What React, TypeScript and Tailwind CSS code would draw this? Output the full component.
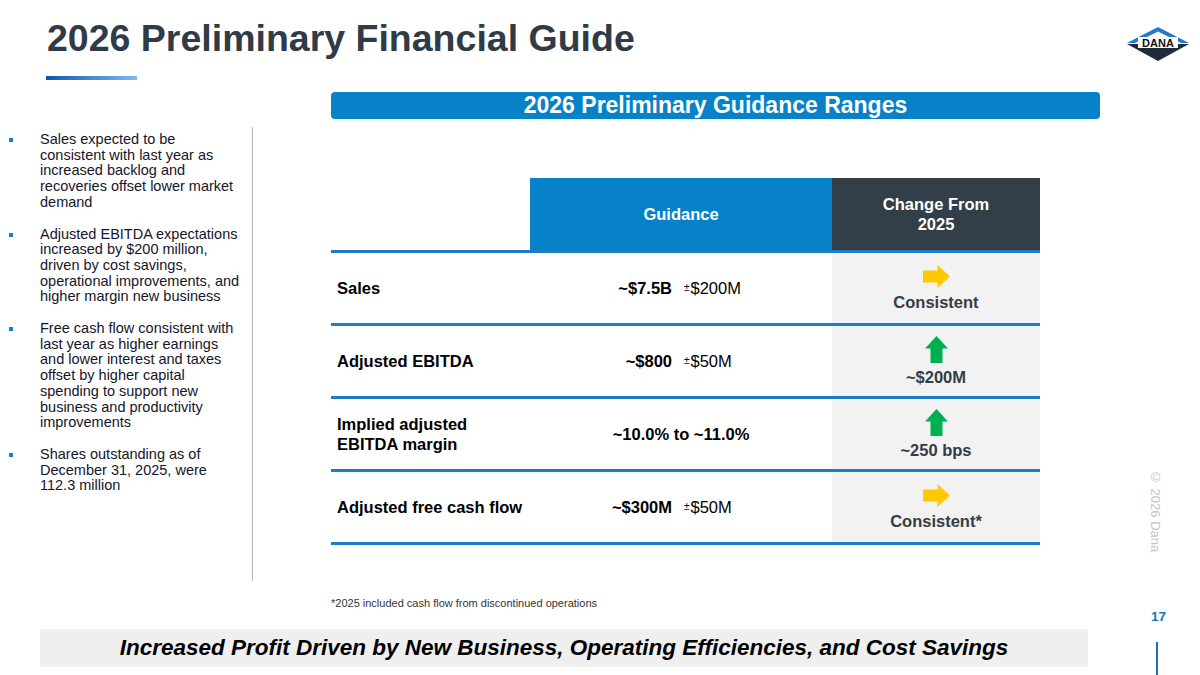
import React from "react";

const bullets: string[][] = [
  [
    "Sales expected to be",
    "consistent with last year as",
    "increased backlog and",
    "recoveries offset lower market",
    "demand",
  ],
  [
    "Adjusted EBITDA expectations",
    "increased by $200 million,",
    "driven by cost savings,",
    "operational improvements, and",
    "higher margin new business",
  ],
  [
    "Free cash flow consistent with",
    "last year as higher earnings",
    "and lower interest and taxes",
    "offset by higher capital",
    "spending to support new",
    "business and productivity",
    "improvements",
  ],
  ["Shares outstanding as of", "December 31, 2025, were", "112.3 million"],
];

type Row = {
  label: string[];
  value?: string;
  range?: string;
  centered?: string;
  arrow: "up" | "right";
  change: string;
};

const rows: Row[] = [
  { label: ["Sales"], value: "~$7.5B", range: "$200M", arrow: "right", change: "Consistent" },
  { label: ["Adjusted EBITDA"], value: "~$800", range: "$50M", arrow: "up", change: "~$200M" },
  { label: ["Implied adjusted", "EBITDA margin"], centered: "~10.0% to ~11.0%", arrow: "up", change: "~250 bps" },
  { label: ["Adjusted free cash flow"], value: "~$300M", range: "$50M", arrow: "right", change: "Consistent*" },
];

function UpArrow() {
  return (
    <svg width="23" height="27" viewBox="0 0 23 27">
      <path d="M11.5 0 L23 12.5 L17.5 12.5 L17.5 27 L5.5 27 L5.5 12.5 L0 12.5 Z" fill="#00b050" />
    </svg>
  );
}

function RightArrow() {
  return (
    <svg width="27" height="23" viewBox="0 0 27 23">
      <path d="M27 11.5 L14.5 0 L14.5 5.5 L0 5.5 L0 17.5 L14.5 17.5 L14.5 23 Z" fill="#ffc800" />
    </svg>
  );
}

function DanaLogo() {
  return (
    <svg width="62" height="34" viewBox="0 0 62 34">
      <polygon points="0,16 31,0 62,16" fill="#1f7cc6" />
      <polygon points="8,16 31,4.5 54,16" fill="#ffffff" />
      <polygon points="0,17 62,17 31,34" fill="#1d2b3c" />
      <rect x="11" y="10" width="40" height="11" fill="#ffffff" />
      <text
        x="31"
        y="19.8"
        textAnchor="middle"
        fontFamily="Liberation Sans, Arial, sans-serif"
        fontWeight="700"
        fontSize="11"
        fill="#111"
      >
        DANA
      </text>
    </svg>
  );
}

export default function App() {
  return (
    <div className="w-[1200px] h-[675px] bg-white flex flex-col overflow-hidden font-['Liberation_Sans',Arial,sans-serif]">
      {/* Title */}
      <div className="h-[92px] flex justify-between shrink-0">
        <div className="pl-[47px] pt-[20px]">
          <h1 className="text-[37.5px] leading-[37px] font-bold text-[#2f3b47] whitespace-nowrap">
            2026 Preliminary Financial Guide
          </h1>
          <div className="mt-[19px] ml-[-1px] w-[91px] h-[4px] bg-gradient-to-r from-[#0a56b0] to-[#7cbdec]" />
        </div>
        <div className="mt-[27px] mr-[11px]">
          <DanaLogo />
        </div>
      </div>

      {/* Main */}
      <div className="h-[537px] flex shrink-0">
        {/* Left bullets */}
        <div className="w-[253px] shrink-0 mt-[35px] h-[454px] border-r border-[#b8b8b8] pt-[5px] pl-[9px]">
          {bullets.map((lines, i) => (
            <div key={i} className={`flex ${i > 0 ? "mt-[16px]" : ""}`}>
              <div className="w-[31px] shrink-0">
                <div className="w-[4px] h-[4px] mt-[6px] bg-[#1a7fc8]" />
              </div>
              <p className="text-[14.5px] leading-[15.7px] text-[#15152a] whitespace-nowrap">
                {lines.map((l, j) => (
                  <React.Fragment key={j}>
                    {l}
                    {j < lines.length - 1 && <br />}
                  </React.Fragment>
                ))}
              </p>
            </div>
          ))}
        </div>

        {/* Right: guidance table */}
        <div className="w-[769px] ml-[78px] shrink-0">
          <div className="h-[27px] rounded-[4px] bg-[#0782c8] flex items-center justify-center text-white font-bold text-[23px] leading-none">
            2026 Preliminary Guidance Ranges
          </div>

          <div className="w-[709px] mt-[59px]">
            {/* header */}
            <div className="flex h-[75px] border-b-[3px] border-[#1e7bc4]">
              <div className="w-[199px]" />
              <div className="w-[302px] bg-[#0782c8] flex items-center justify-center text-white font-bold text-[16.5px]">
                Guidance
              </div>
              <div className="w-[208px] bg-[#333f48] flex items-center justify-center text-center text-white font-bold text-[16.5px] leading-[20px]">
                Change From
                <br />
                2025
              </div>
            </div>

            {rows.map((r, i) => (
              <div key={i} className="flex h-[73px] border-b-[3px] border-[#1e7bc4]">
                <div className="w-[199px] pl-[6px] flex items-center text-[16.5px] leading-[20px] font-bold text-black">
                  <div>
                    {r.label.map((l, j) => (
                      <div key={j} className="whitespace-nowrap">
                        {l}
                      </div>
                    ))}
                  </div>
                </div>
                <div className="w-[302px] flex items-center text-[16.5px] text-black">
                  {r.centered ? (
                    <div className="w-full text-center font-bold">{r.centered}</div>
                  ) : (
                    <>
                      <div className="w-[142px] text-right font-bold">{r.value}</div>
                      <div className="ml-[12px] flex items-center">
                        <span className="text-[10px] relative top-[-1px] mr-[1px]">±</span>
                        <span>{r.range}</span>
                      </div>
                    </>
                  )}
                </div>
                <div className="w-[208px] bg-[#f2f2f2] flex flex-col items-center justify-center gap-[5px]">
                  {r.arrow === "up" ? <UpArrow /> : <RightArrow />}
                  <div className="text-[16.5px] leading-[18px] font-bold text-[#333d47]">{r.change}</div>
                </div>
              </div>
            ))}
          </div>

          <p className="mt-[52px] text-[11px] leading-[13px] text-[#333]">
            *2025 included cash flow from discontinued operations
          </p>
        </div>

        {/* Right rail */}
        <div className="w-[100px] shrink-0 pl-[49px]">
          <div className="mt-[378px] [writing-mode:vertical-rl] text-[13px] leading-[13px] text-[#c4c4c4] whitespace-nowrap">
            © 2026 Dana
          </div>
          <div className="mt-[58px] ml-[2px] text-[13.5px] leading-[14px] font-bold text-[#1a75bb]">17</div>
        </div>
      </div>

      {/* Bottom banner */}
      <div className="h-[46px] flex shrink-0">
        <div className="ml-[40px] w-[1048px] h-[38px] bg-[#efefef] flex items-center justify-center">
          <span className="text-[22.5px] font-bold italic text-black whitespace-nowrap">
            Increased Profit Driven by New Business, Operating Efficiencies, and Cost Savings
          </span>
        </div>
        <div className="ml-[68px] mt-[13px] w-[2px] h-[33px] bg-[#1a6fb8]" />
      </div>
    </div>
  );
}
